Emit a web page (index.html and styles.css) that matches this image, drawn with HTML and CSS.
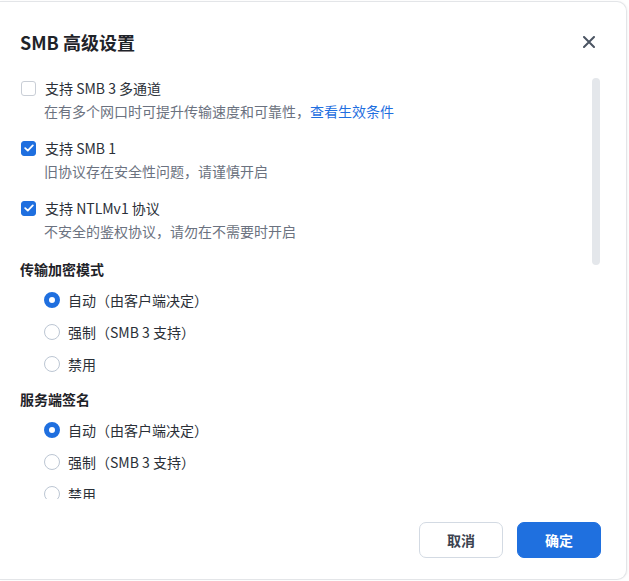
FILE: index.html
```html
<!DOCTYPE html>
<html lang="zh-CN">
<head>
<meta charset="utf-8">
<title>SMB 高级设置</title>
<link rel="stylesheet" href="styles.css">
</head>
<body>
<div class="dialog">
  <div class="dialog-header">
    <h1 class="dialog-title">SMB 高级设置</h1>
    <button class="close-btn" aria-label="关闭">
      <svg width="12" height="12" viewBox="0 0 12 12"><path d="M1 1 L11 11 M11 1 L1 11" stroke="#4b5563" stroke-width="2" stroke-linecap="round" fill="none"/></svg>
    </button>
  </div>
  <div class="dialog-body">
    <div class="scroll-content">
      <div class="option">
        <div class="option-label"><span class="checkbox"></span><span>支持 SMB 3 多通道</span></div>
        <div class="option-desc">在有多个网口时可提升传输速度和可靠性，<a class="link">查看生效条件</a></div>
      </div>
      <div class="option">
        <div class="option-label"><span class="checkbox checked"><svg width="10" height="8" viewBox="0 0 10 8"><path d="M1.2 4.2 L3.8 6.6 L8.8 1.4" stroke="#fff" stroke-width="1.8" fill="none" stroke-linecap="round" stroke-linejoin="round"/></svg></span><span>支持 SMB 1</span></div>
        <div class="option-desc">旧协议存在安全性问题，请谨慎开启</div>
      </div>
      <div class="option">
        <div class="option-label"><span class="checkbox checked"><svg width="10" height="8" viewBox="0 0 10 8"><path d="M1.2 4.2 L3.8 6.6 L8.8 1.4" stroke="#fff" stroke-width="1.8" fill="none" stroke-linecap="round" stroke-linejoin="round"/></svg></span><span>支持 NTLMv1 协议</span></div>
        <div class="option-desc">不安全的鉴权协议，请勿在不需要时开启</div>
      </div>
      <div class="section">
        <div class="section-title">传输加密模式</div>
        <div class="radio-list">
          <div class="radio-row"><span class="radio checked"></span><span>自动（由客户端决定）</span></div>
          <div class="radio-row"><span class="radio"></span><span>强制（SMB 3 支持）</span></div>
          <div class="radio-row"><span class="radio"></span><span>禁用</span></div>
        </div>
      </div>
      <div class="section">
        <div class="section-title">服务端签名</div>
        <div class="radio-list">
          <div class="radio-row"><span class="radio checked"></span><span>自动（由客户端决定）</span></div>
          <div class="radio-row"><span class="radio"></span><span>强制（SMB 3 支持）</span></div>
          <div class="radio-row"><span class="radio"></span><span>禁用</span></div>
        </div>
      </div>
    </div>
    <div class="scroll-thumb"></div>
  </div>
  <div class="dialog-footer">
    <button class="btn btn-default">取消</button>
    <button class="btn btn-primary">确定</button>
  </div>
</div>
</body>
</html>
```
FILE: styles.css
```css
* { box-sizing: border-box; }
html, body { margin: 0; padding: 0; }
body {
  background: #ffffff;
  font-family: "Noto Sans CJK SC", "Noto Sans", sans-serif;
  color: #333a45;
  width: 629px;
  height: 581px;
  overflow: hidden;
}
.dialog {
  margin-top: 1px;
  width: 627px;
  height: 579px;
  background: #fff;
  border: 1px solid #e3e5e8;
  border-left: none;
  border-radius: 0 10px 10px 0;
  display: flex;
  flex-direction: column;
  box-shadow: 1px 0 2px rgba(0,0,0,0.04);
}
.dialog-header {
  height: 75px;
  display: flex;
  align-items: flex-start;
  justify-content: space-between;
  padding: 27px 31px 0 20px;
}
.dialog-title {
  margin: 0;
  font-size: 18px;
  line-height: 26px;
  font-weight: 700;
  color: #1f2329;
}
.close-btn {
  border: none;
  background: none;
  padding: 0;
  margin-top: 7px;
  width: 12px;
  height: 12px;
  display: flex;
}
.dialog-body {
  position: relative;
  height: 422px;
  overflow: hidden;
}
.scroll-content {
  padding: 0 0 0 20px;
  font-size: 14px;
}
.option { margin-bottom: 15px; }
.option-label {
  display: flex;
  align-items: center;
  height: 22px;
  line-height: 22px;
  color: #2b3038;
}
.checkbox {
  width: 15px;
  height: 15px;
  border: 1px solid #c9ced6;
  border-radius: 3px;
  margin: 0 9px 0 1px;
  display: inline-flex;
  align-items: center;
  justify-content: center;
  flex: none;
}
.checkbox.checked {
  background: #1f6fdf;
  border-color: #1f6fdf;
}
.option-desc {
  margin-top: 1px;
  padding-left: 24px;
  line-height: 22px;
  color: #6b7280;
}
.link { color: #1f6fdf; text-decoration: none; }
.option + .section { margin-top: 16px; }
.section + .section { margin-top: 8px; }
.section-title {
  font-weight: 700;
  line-height: 22px;
  height: 22px;
  color: #1f2329;
}
.radio-list {
  padding: 4px 0 0 24px;
  display: flex;
  flex-direction: column;
}
.radio-row {
  height: 32px;
  display: flex;
  align-items: center;
  color: #2b3038;
}
.radio {
  width: 16px;
  height: 16px;
  border: 1px solid #bcc6d3;
  border-radius: 50%;
  margin-right: 8px;
  flex: none;
}
.radio.checked {
  border: 5px solid #1f6fdf;
  background: #fff;
}
.scroll-thumb {
  position: absolute;
  left: 592px;
  top: 1px;
  width: 8px;
  height: 187px;
  border-radius: 4px;
  background: #e4e7eb;
}
.dialog-footer {
  flex: 1;
  display: flex;
  justify-content: flex-end;
  align-items: flex-start;
  gap: 14px;
  padding: 23px 25px 0 0;
}
.btn {
  width: 84px;
  height: 36px;
  border-radius: 7px;
  font-family: inherit;
  font-size: 14px;
  font-weight: 700;
  cursor: pointer;
}
.btn-default {
  background: #fff;
  border: 1px solid #d3dae3;
  color: #3b4250;
}
.btn-primary {
  background: #1f70df;
  border: 1px solid #1f70df;
  color: #fff;
}
```
